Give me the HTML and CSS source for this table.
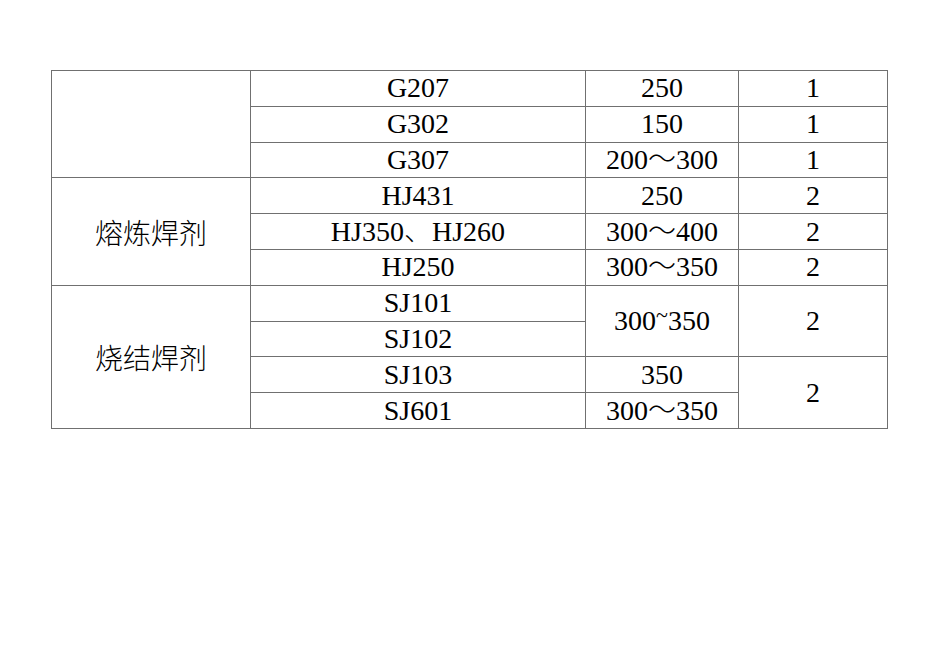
FILE: index.html
```html
<!DOCTYPE html>
<html lang="en">
<head>
<meta charset="utf-8">
<title>焊剂</title>
<link rel="stylesheet" href="styles.css">
</head>
<body>
<table class="grid">
  <colgroup>
    <col class="c1"><col class="c2"><col class="c3"><col class="c4">
  </colgroup>
  <tbody>
    <tr><td rowspan="3" class="cat"></td><td>G207</td><td>250</td><td>1</td></tr>
    <tr><td>G302</td><td>150</td><td>1</td></tr>
    <tr><td>G307</td><td>200<span class="wt">～</span>300</td><td>1</td></tr>
    <tr><td rowspan="3" class="cat">熔炼焊剂</td><td>HJ431</td><td>250</td><td>2</td></tr>
    <tr><td>HJ350<span class="wt">、</span>HJ260</td><td>300<span class="wt">～</span>400</td><td>2</td></tr>
    <tr><td>HJ250</td><td>300<span class="wt">～</span>350</td><td>2</td></tr>
    <tr><td rowspan="4" class="cat">烧结焊剂</td><td>SJ101</td><td rowspan="2">300<span class="tl">~</span>350</td><td rowspan="2">2</td></tr>
    <tr><td>SJ102</td></tr>
    <tr><td>SJ103</td><td>350</td><td rowspan="2">2</td></tr>
    <tr><td>SJ601</td><td>300<span class="wt">～</span>350</td></tr>
  </tbody>
</table>
</body>
</html>
```
FILE: styles.css
```css
html, body {
  margin: 0;
  padding: 0;
  background: #ffffff;
}
body {
  padding: 70px 0 0 51px;
}
.grid {
  border-collapse: collapse;
  table-layout: fixed;
  width: 836px;
  font-family: "Liberation Serif", serif;
  font-size: 28px;
  color: #000;
}
.c1 { width: 199px; }
.c2 { width: 335px; }
.c3 { width: 153px; }
.c4 { width: 149px; }
.grid tr {
  height: 35.8px;
}
.grid td {
  border: 1px solid #707070;
  padding: 0;
  text-align: center;
  vertical-align: middle;
  line-height: 1;
  white-space: nowrap;
}
.grid td.cat {
  font-family: "Noto Sans CJK SC", sans-serif;
  font-size: 28px;
  font-weight: 300;
}
.wt {
  font-family: "Noto Sans CJK SC", sans-serif;
  font-weight: 300;
  line-height: 0;
}
.tl {
  position: relative;
  top: -8px;
  font-size: 22px;
  line-height: 0;
}
```
